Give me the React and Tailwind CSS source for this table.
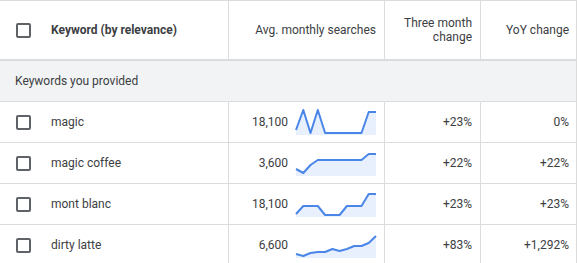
import React from 'react';

const rows = [
  { kw: 'magic', avg: '18,100', three: '+23%', yoy: '0%', trend: [21, 1, 24, 1, 24, 24, 24, 24, 24, 24, 3, 3] },
  { kw: 'magic coffee', avg: '3,600', three: '+22%', yoy: '+22%', trend: [19, 23, 15, 10, 10, 10, 10, 10, 10, 10, 4, 4] },
  { kw: 'mont blanc', avg: '18,100', three: '+23%', yoy: '+23%', trend: [23, 15, 15, 15, 24, 24, 24, 15, 15, 15, 3, 3] },
  { kw: 'dirty latte', avg: '6,600', three: '+83%', yoy: '+1,292%', trend: [22, 24, 21, 20, 20, 17, 19, 17, 14, 14, 11, 4] },
];

const Checkbox = () => (
  <span className="block w-[15px] h-[15px] border-2 border-[#5f6368] rounded-[2px] shrink-0" />
);

const Sparkline = ({ data }) => {
  const step = 80 / (data.length - 1);
  const pts = data.map((y, i) => `${(i * step).toFixed(1)},${y}`).join(' ');
  return (
    <svg width="80" height="26" viewBox="0 0 80 26" className="block shrink-0 overflow-visible">
      <polygon points={`0,26 ${pts} 80,26`} fill="#e8f0fe" />
      <polyline points={pts} fill="none" stroke="#4a86e8" strokeWidth="2" strokeLinejoin="round" />
    </svg>
  );
};

export default function App() {
  return (
    <div className="w-[578px] h-[263px] bg-white overflow-hidden text-[12px] text-[#3c4043]" style={{ fontFamily: 'Roboto, "Liberation Sans", sans-serif' }}>
      <div className="w-[577px] border-r border-[#dadce0]">
        {/* header */}
        <div className="grid grid-cols-[229px_156px_96px_96px] h-[61px] border-t border-b-2 border-[#dadce0]">
          <div className="flex items-center gap-[20px] pl-[16px] border-r border-[#dadce0]">
            <Checkbox />
            <span className="font-bold text-[#3c4043]">Keyword (by relevance)</span>
          </div>
          <div className="flex items-center justify-end pr-[8px] border-r border-[#dadce0]">Avg. monthly searches</div>
          <div className="flex items-center justify-end pr-[8px] text-right leading-[14px] border-r border-[#dadce0]">
            Three month<br />change
          </div>
          <div className="flex items-center justify-end pr-[8px]">YoY change</div>
        </div>

        {/* group row */}
        <div className="h-[41px] flex items-center pl-[15px] bg-[#f1f3f4] border-b border-[#dadce0]">
          Keywords you provided
        </div>

        {rows.map((r) => (
          <div key={r.kw} className="grid grid-cols-[229px_156px_96px_96px] h-[41px] border-b border-[#dadce0]">
            <div className="flex items-center gap-[20px] pl-[16px] border-r border-[#dadce0]">
              <Checkbox />
              <span>{r.kw}</span>
            </div>
            <div className="flex items-center justify-end gap-[8px] pr-[8px] border-r border-[#dadce0]">
              <span>{r.avg}</span>
              <Sparkline data={r.trend} />
            </div>
            <div className="flex items-center justify-end pr-[8px] border-r border-[#dadce0]">{r.three}</div>
            <div className="flex items-center justify-end pr-[8px]">{r.yoy}</div>
          </div>
        ))}
      </div>
    </div>
  );
}
